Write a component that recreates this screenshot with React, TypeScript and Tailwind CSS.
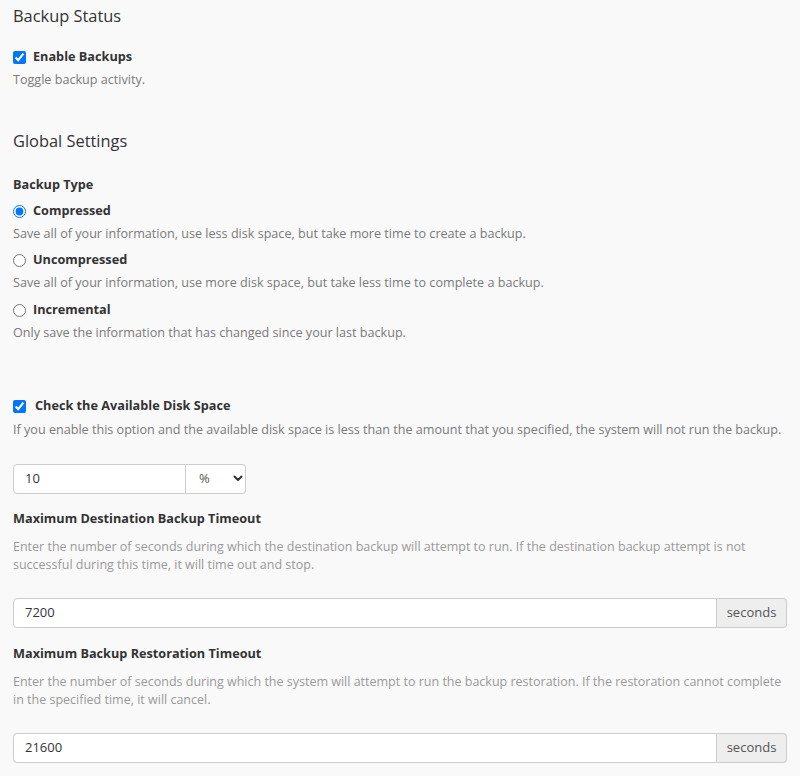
function Desc({ children, light }: { children: React.ReactNode; light?: boolean }) {
    return <p className={(light ? 'text-[#999] text-[12.5px]' : 'text-[#7a7a7a] text-[12.6px]') + ' leading-[18px]'}>{children}</p>
}

function Radio({ label, checked }: { label: string; checked?: boolean }) {
    return (
        <label className="flex items-center gap-[7px] h-5 text-[12.7px] font-bold text-[#333]">
            <input type="radio" name="backup-type" defaultChecked={checked} className="m-0 w-[13px] h-[13px] accent-[#0075ff]" />
            {label}
        </label>
    )
}

function TimeoutField({ value }: { value: string }) {
    return (
        <div className="flex h-[30px] text-[13px]">
            <input
                defaultValue={value}
                className="flex-1 min-w-0 bg-white border border-[#ccc] rounded-l px-[11px] text-[#333] outline-none"
            />
            <span className="w-[70px] flex items-center justify-center bg-[#eee] border border-l-0 border-[#ccc] rounded-r text-[#555]">
                seconds
            </span>
        </div>
    )
}

export default function App() {
    return (
        <div className="min-h-[776px] bg-[#f9f9f9] px-[13px] pt-1 text-[#333]" style={{ fontFamily: '"Open Sans", sans-serif' }}>
            <h2 className="text-[16.4px] leading-6 font-normal">Backup Status</h2>
            <label className="mt-[19px] flex items-center gap-[7px] h-5 text-[12.7px] font-bold">
                <input type="checkbox" defaultChecked className="m-0 w-[13px] h-[13px] accent-[#0075ff]" />
                Enable Backups
            </label>
            <div className="mt-1">
                <Desc>Toggle backup activity.</Desc>
            </div>

            <h2 className="mt-10 text-[16.4px] leading-6 font-normal">Global Settings</h2>
            <p className="mt-[21px] h-5 leading-5 text-[12.7px] font-bold">Backup Type</p>
            <div className="mt-[7px]">
                <Radio label="Compressed" checked />
                <div className="mt-1">
                    <Desc>Save all of your information, use less disk space, but take more time to create a backup.</Desc>
                </div>
                <div className="mt-[7px]">
                    <Radio label="Uncompressed" />
                </div>
                <div className="mt-1">
                    <Desc>Save all of your information, use more disk space, but take less time to complete a backup.</Desc>
                </div>
                <div className="mt-2">
                    <Radio label="Incremental" />
                </div>
                <div className="mt-1">
                    <Desc>Only save the information that has changed since your last backup.</Desc>
                </div>
            </div>

            <label className="mt-[54px] flex items-center gap-[9px] h-5 text-[12.7px] font-bold">
                <input type="checkbox" defaultChecked className="m-0 w-[13px] h-[13px] accent-[#0075ff]" />
                Check the Available Disk Space
            </label>
            <div className="mt-[5px]">
                <Desc>If you enable this option and the available disk space is less than the amount that you specified, the system will not run the backup.</Desc>
            </div>

            <div className="mt-[25px] flex h-[30px] w-[233px] text-[13px]">
                <input
                    defaultValue="10"
                    className="w-[173px] bg-white border border-[#ccc] rounded-l px-[11px] text-[#333] outline-none"
                />
                <div className="relative flex-1">
                    <select className="appearance-none w-full h-full bg-white border border-l-0 border-[#ccc] rounded-r pl-[13px] text-[#555] outline-none">
                        <option>%</option>
                        <option>MB</option>
                    </select>
                    <svg
                        viewBox="0 0 10 7"
                        className="absolute right-[3px] top-[11px] w-[10px] h-[7px] pointer-events-none"
                        fill="none"
                        stroke="#333"
                        strokeWidth="2"
                        strokeLinecap="round"
                        strokeLinejoin="round"
                    >
                        <path d="M1.5 1.5 L5 5 L8.5 1.5" />
                    </svg>
                </div>
            </div>

            <p className="mt-[14px] h-5 leading-5 text-[12.7px] font-bold">Maximum Destination Backup Timeout</p>
            <div className="mt-[10px]">
                <Desc light>
                    Enter the number of seconds during which the destination backup will attempt to run. If the destination backup attempt is not successful during this time, it will time out and stop.
                </Desc>
            </div>
            <div className="mt-6">
                <TimeoutField value="7200" />
            </div>

            <p className="mt-[15px] h-5 leading-5 text-[12.7px] font-bold">Maximum Backup Restoration Timeout</p>
            <div className="mt-[10px]">
                <Desc light>
                    Enter the number of seconds during which the system will attempt to run the backup restoration. If the restoration cannot complete in the specified time, it will cancel.
                </Desc>
            </div>
            <div className="mt-6">
                <TimeoutField value="21600" />
            </div>
        </div>
    )
}
